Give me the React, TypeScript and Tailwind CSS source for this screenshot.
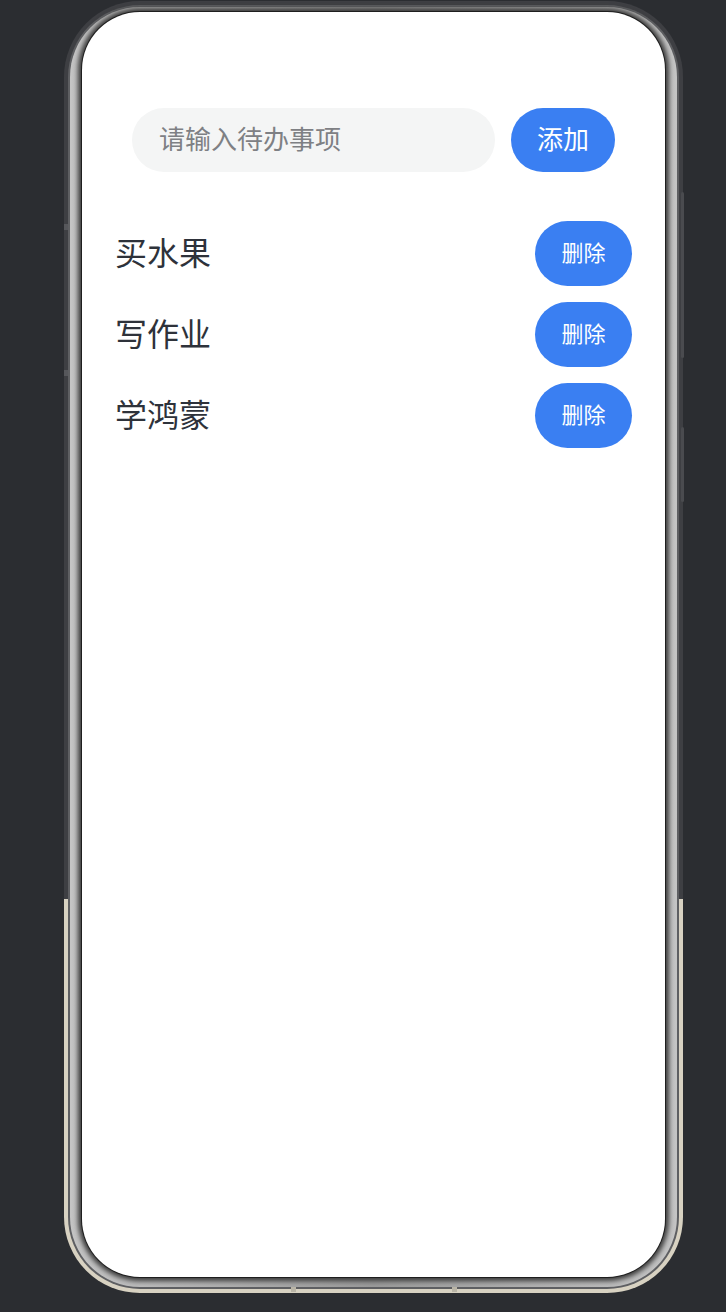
import { useState } from "react";

export default function App() {
  const [items, setItems] = useState(["买水果", "写作业", "学鸿蒙"]);
  const [text, setText] = useState("");

  const add = () => {
    if (!text.trim()) return;
    setItems([...items, text.trim()]);
    setText("");
  };

  return (
    <div
      className="relative w-[726px] h-[1312px] overflow-hidden bg-[#2b2d31]"
      style={{ fontFamily: '"Noto Sans CJK SC", "Noto Sans", sans-serif' }}
    >
      {/* side keys + antenna ticks on the frame */}
      <div className="absolute left-[681px] top-[192px] w-[3px] h-[166px] rounded-full bg-[#4a4b4f]" />
      <div className="absolute left-[681px] top-[427px] w-[3px] h-[75px] rounded-full bg-[#4a4b4f]" />
      <div className="absolute left-[64px] top-[224px] w-[4px] h-[6px] bg-[#56575b] z-10" />
      <div className="absolute left-[64px] top-[370px] w-[4px] h-[6px] bg-[#56575b] z-10" />
      <div className="absolute left-[291px] top-[1287px] w-[5px] h-[5px] bg-[#b9b4a6] z-10" />
      <div className="absolute left-[452px] top-[1287px] w-[5px] h-[5px] bg-[#b9b4a6] z-10" />

      <div className="ml-[64px] mt-[1px] w-[619px] h-[1292px] rounded-[76px] p-[4px] bg-[linear-gradient(to_bottom,#3e3f43_0%,#3e3f43_69.5%,#d8d2c2_69.5%,#d8d2c2_100%)]">
        <div className="w-full h-full rounded-[72px] p-[2px] bg-[#5e5f62]">
          <div className="w-full h-full rounded-[70px] pt-[5px] px-[12px] pb-[10px] bg-[linear-gradient(to_right,#c4c4c4,#9a9a9a_50%,#c4c4c4)] flex">
            <div className="flex-1 rounded-[58px] bg-white overflow-hidden shadow-[0_0_0_1px_#1e1e1e,0_0_5px_4px_#3a3a3a]">
              <div className="pt-[96px] px-[50px] flex gap-[16px]">
                <input
                  value={text}
                  onChange={(e) => setText(e.target.value)}
                  placeholder="请输入待办事项"
                  className="flex-1 min-w-0 h-[64px] rounded-full bg-[#f4f5f5] pl-[27px] pb-[6px] text-[26px] text-[#2e323a] placeholder:text-[#7e8084] outline-none"
                />
                <button
                  onClick={add}
                  className="w-[104px] h-[64px] rounded-full bg-[#3a7ff2] pb-[6px] text-white text-[26px]"
                >
                  添加
                </button>
              </div>

              <div className="mt-[49px] px-[33px] flex flex-col gap-[16px]">
                {items.map((item, idx) => (
                  <div key={idx} className="flex items-center justify-between h-[65px]">
                    <span className="pb-[6px] text-[32px] text-[#2e323a]">{item}</span>
                    <button
                      onClick={() => setItems(items.filter((_, i) => i !== idx))}
                      className="w-[97px] h-[65px] rounded-full bg-[#3a7ff2] pb-[5px] text-white text-[22px]"
                    >
                      删除
                    </button>
                  </div>
                ))}
              </div>
            </div>
          </div>
        </div>
      </div>
    </div>
  );
}
